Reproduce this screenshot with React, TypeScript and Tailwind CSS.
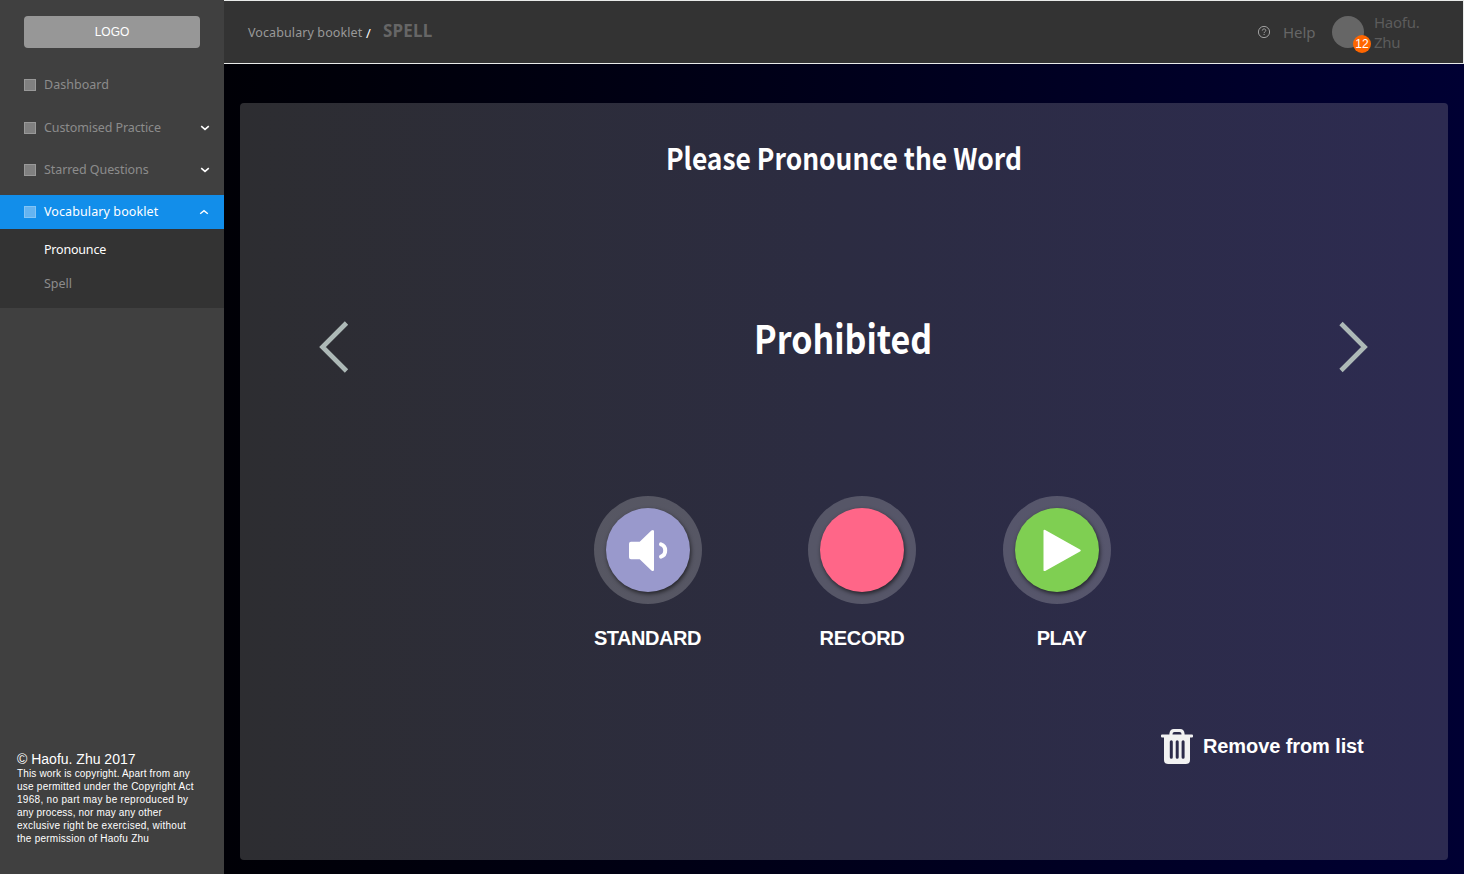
import React from "react";

const NAV = "font-['Noto_Sans',sans-serif]";
const DISPLAY = "font-['Noto_Sans_CJK_SC',sans-serif]";

function Chevron({ up = false, className = "" }: { up?: boolean; className?: string }) {
  return (
    <svg width="10" height="6" viewBox="0 0 10 6" fill="none" className={className}>
      <path d={up ? "M1.2 4.8 5 1.6 8.8 4.8" : "M1.2 1.2 5 4.4 8.8 1.2"} stroke="currentColor" strokeWidth={up ? 1.4 : 1.6} />
    </svg>
  );
}

function NavItem({ label, arrow, className, spacing }: { label: string; arrow?: boolean; className: string; spacing: string }) {
  return (
    <div className={`flex h-5 items-center pl-6 pr-[14px] text-[#8c8c8c] ${className}`}>
      <span className="mr-2 size-3 border border-[#999] bg-[#808080]" />
      <span className={`whitespace-nowrap text-[12.5px] leading-5 ${spacing}`}>{label}</span>
      {arrow && <Chevron className="ml-auto text-white" />}
    </div>
  );
}

function RoundButton({ label, color, spacing, children, className }: { label: string; color: string; spacing: string; children?: React.ReactNode; className: string }) {
  return (
    <div className={`flex w-[108px] flex-col items-center ${className}`}>
      <button className="flex size-[108px] items-center justify-center rounded-full bg-white/20">
        <span className={`flex size-[84px] items-center justify-center rounded-full shadow-[1px_2px_4px_rgba(0,0,0,0.6)] ${color}`}>
          {children}
        </span>
      </button>
      <span className={`mt-[22px] whitespace-nowrap text-[20px] font-bold leading-6 text-white ${spacing}`}>{label}</span>
    </div>
  );
}

function Sidebar() {
  return (
    <aside className="flex w-56 shrink-0 flex-col bg-[#404040]">
      <div className="mx-6 mt-4 flex h-8 items-center justify-center rounded bg-[#979797] text-[12px] text-white">LOGO</div>
      <nav className={`mt-[27px] ${NAV}`}>
        <NavItem label="Dashboard" className="" spacing="tracking-[0.03px]" />
        <NavItem label="Customised Practice" arrow className="mt-[23px]" spacing="tracking-[-0.1px]" />
        <NavItem label="Starred Questions" arrow className="mt-[22px]" spacing="tracking-[-0.08px]" />
        <div className="mt-[15px] flex h-[34px] items-center bg-[#128eea] pl-6 pr-[15px] text-white">
          <span className="mr-2 size-3 border border-[#83c4f5] bg-[#65b4f1]" />
          <span className="whitespace-nowrap text-[12.5px] leading-5 tracking-[0.1px]">Vocabulary booklet</span>
          <Chevron up className="ml-auto" />
        </div>
        <div className="flex h-[79px] flex-col gap-[14px] bg-[#333] pl-11 pt-[11px] text-[12.5px] leading-5">
          <span className="tracking-[-0.2px] text-white">Pronounce</span>
          <span className="text-[#8c8c8c]">Spell</span>
        </div>
      </nav>
      <footer className="mb-[29px] ml-[17px] mt-auto whitespace-nowrap text-white">
        <p className="text-[14px] leading-4">© Haofu. Zhu 2017</p>
        <p className="text-[10px] leading-[13px] tracking-[0.24px]">
          <span className="tracking-[0.16px]">This work is copyright. Apart from any</span><br />
          use permitted under the Copyright Act<br />
          <span className="tracking-[0.3px]">1968, no part may be reproduced by</span><br />
          <span className="tracking-[0.16px]">any process, nor may any other</span><br />
          exclusive right be exercised, without<br />
          the permission of Haofu Zhu
        </p>
      </footer>
    </aside>
  );
}

function Header() {
  return (
    <header className={`flex h-16 border-y border-r border-[#e9ebea] bg-[#333] pl-6 ${NAV}`}>
      <span className="mt-[22px] w-[114px] whitespace-nowrap text-[12.5px] leading-5 tracking-[0.1px] text-[#999]">Vocabulary booklet</span>
      <span className="ml-1 mt-[22px] w-[6px] text-[13px] leading-5 text-white">/</span>
      <span className="ml-[11px] mt-[18px] text-[17px] font-bold leading-6 tracking-[0.2px] text-[#666]">SPELL</span>
      <div className="ml-auto flex w-[206px]">
        <svg width="14" height="14" viewBox="0 0 14 14" fill="none" stroke="#a0a0a0" className="mt-6">
          <circle cx="7" cy="7" r="5.6" strokeWidth="1" />
          <path d="M5.3 5.6C5.3 3.3 8.8 3.4 8.8 5.5 8.8 6.7 7.1 6.7 7.1 8.1M7.1 9v1" strokeWidth="1" />
        </svg>
        <span className="ml-3 mt-[21px] w-[49px] text-[15px] leading-5 tracking-[-0.1px] text-[#666]">Help</span>
        <div className="relative mt-[15px] size-8 rounded-full bg-[#666]">
          <span className="absolute left-[21px] top-[19px] flex size-[18px] items-center justify-center rounded-full bg-[#f60] font-['Liberation_Sans',sans-serif] text-[12px] text-white">12</span>
        </div>
        <span className="ml-[10px] mt-[11px] text-[15px] leading-5 tracking-[-0.25px] text-[#5c5c5c]">Haofu.<br />Zhu</span>
      </div>
    </header>
  );
}

export default function App() {
  return (
    <div className="flex h-[874px] w-[1464px] overflow-hidden font-['Liberation_Sans',sans-serif]">
      <Sidebar />
      <main className="flex flex-1 flex-col bg-gradient-to-r from-[#000006] to-[#000033]">
        <Header />
        <section className="mx-4 mb-[14px] mt-[39px] flex flex-1 flex-col rounded bg-gradient-to-r from-[#2d2d31] via-[#2c2c42] to-[#2d2b51] text-white">
          <h1 className={`mt-[34px] scale-x-[0.88] whitespace-nowrap text-center text-[30px] font-bold leading-10 ${DISPLAY}`}>Please Pronounce the Word</h1>
          <div className="mt-[131px] flex h-[72px] items-center justify-between pl-[79px] pr-[80px]">
            <svg width="30" height="54" viewBox="0 0 30 54" fill="none" className="mt-[5px]">
              <path d="M27.5 3 3.5 27 27.5 51" stroke="#adb9b7" strokeWidth="4.7" />
            </svg>
            <h2 className={`-mt-[14px] scale-x-[0.872] text-[39px] font-bold leading-[56px] ${DISPLAY}`}>Prohibited</h2>
            <svg width="30" height="54" viewBox="0 0 30 54" fill="none" className="mt-[5px]">
              <path d="M3 3.5 26.5 27 3 50.5" stroke="#adb9b7" strokeWidth="4.7" />
            </svg>
          </div>
          <div className="mt-[116px] flex pl-[354px]">
            <RoundButton label="STANDARD" color="bg-[#9999cc]" spacing="-ml-px tracking-[-0.45px]" className="">
              <svg width="42" height="44" viewBox="0 0 42 44" fill="white">
                <path d="M4 13.7h8.7L24.4 2.6Q27 1 27 3.6v37.8q0 2.6-2.6 1L12.7 31.3H4q-2 0-2-2V15.7q0-2 2-2Z" />
                <path d="M34 16.4C39.6 18.2 39.6 26.8 34 28.6" fill="none" stroke="white" strokeWidth="4" strokeLinecap="round" />
              </svg>
            </RoundButton>
            <RoundButton label="RECORD" color="bg-[#ff6688]" spacing="tracking-[-0.3px]" className="ml-[106px]" />
            <RoundButton label="PLAY" color="bg-[#7fcf52]" spacing="ml-[9px] tracking-[-0.5px]" className="ml-[87px]">
              <svg width="38" height="42" viewBox="0 0 38 42" fill="white" className="ml-[9px]">
                <path d="M.5 2Q.5 0 2.2 1L37 20.5q1.5 1 0 2L2.2 42Q.5 42.5 .5 41Z" />
              </svg>
            </RoundButton>
          </div>
          <button className="ml-[920px] mt-[78px] flex items-center text-[20px] font-bold leading-6">
            <svg width="34" height="36" viewBox="0 0 34 36" fill="#f2f2f2">
              <path fillRule="evenodd" d="M2 6.5h7.4V5.8Q9.8 1 13.8 1h6.4q4 0 4.4 4.8v.7H32q1 0 1 1v1q0 1-1 1h-2V32q0 4-4 4H8q-4 0-4-4V9.5H2q-1 0-1-1v-1q0-1 1-1ZM12.5 6.5h9V6q0-2-2-2h-5q-2 0-2 2ZM11.3 12.2q-1.5 0-1.5 1.5v15.5q0 1.5 1.5 1.5t1.5-1.5V13.7q0-1.5-1.5-1.5ZM17.2 12.2q-1.5 0-1.5 1.5v15.5q0 1.5 1.5 1.5t1.5-1.5V13.7q0-1.5-1.5-1.5ZM23.1 12.2q-1.5 0-1.5 1.5v15.5q0 1.5 1.5 1.5t1.5-1.5V13.7q0-1.5-1.5-1.5Z" />
            </svg>
            <span className="-mt-[1px] ml-[9px] whitespace-nowrap tracking-[-0.1px]">Remove from list</span>
          </button>
        </section>
      </main>
    </div>
  );
}
